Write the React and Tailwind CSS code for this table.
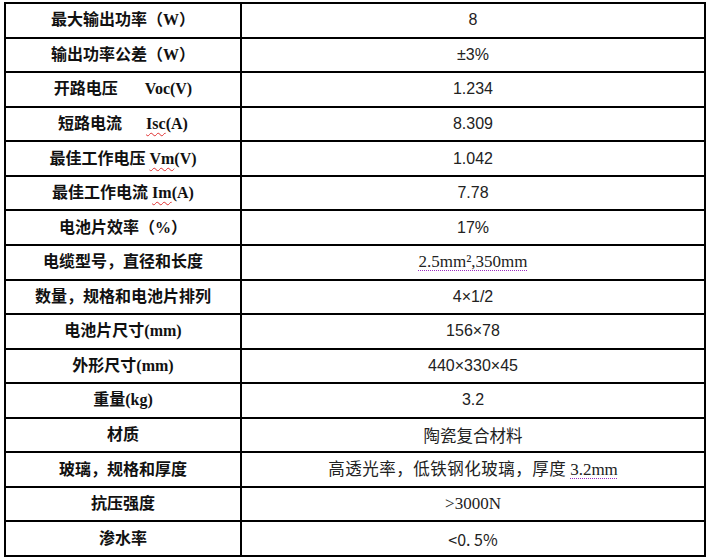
import React from 'react';

const wavy = 'underline decoration-wavy decoration-[#e03030] decoration-1 underline-offset-[3px]';
const dotted = 'underline decoration-dotted decoration-[#9b30c0] decoration-1 underline-offset-[3px]';

const serif = "font-['Liberation_Serif','Noto_Sans_CJK_SC',serif]";
const sans = "font-['Liberation_Sans','Noto_Sans_CJK_SC',sans-serif] text-[16px]";
const cjk = "font-['Noto_Sans_CJK_SC',sans-serif] text-[16.5px]";
const latin = "font-['Liberation_Serif',serif] text-[17px]";

const rows = [
  { label: <>最大输出功率（W）</>, value: <span className={sans}>8</span> },
  { label: <>输出功率公差（W）</>, value: <span className={sans}>±3%</span> },
  { label: <>开路电压<span className="inline-block w-[27px]" />Voc(V)</>, value: <span className={sans}>1.234</span> },
  { label: <>短路电流<span className="inline-block w-[24px]" /><span className={wavy}>Isc</span>(A)</>, value: <span className={sans}>8.309</span> },
  { label: <>最佳工作电压<span className="inline-block w-[4px]" /><span className={wavy}>Vm</span>(V)</>, value: <span className={sans}>1.042</span> },
  { label: <>最佳工作电流<span className="inline-block w-[4px]" /><span className={wavy}>Im</span>(A)</>, value: <span className={sans}>7.78</span> },
  { label: <>电池片效率（%）</>, value: <span className={sans}>17%</span> },
  { label: <>电缆型号，直径和长度</>, value: <span className={`${latin} ${dotted}`}>2.5mm²,350mm</span> },
  { label: <>数量，规格和电池片排列</>, value: <span className={sans}>4×1/2</span> },
  { label: <>电池片尺寸(mm)</>, value: <span className={sans}>156×78</span> },
  { label: <>外形尺寸(mm)</>, value: <span className={sans}>440×330×45</span> },
  { label: <>重量(kg)</>, value: <span className={sans}>3.2</span> },
  { label: <>材质</>, value: <span className={cjk}>陶瓷复合材料</span> },
  {
    label: <>玻璃，规格和厚度</>,
    value: (
      <span className={`${cjk} tracking-[0.5px]`}>
        高透光率，低铁钢化玻璃，厚度<span className="inline-block w-[4px]" />
        <span className={`${latin} tracking-normal ${dotted}`}>3.2mm</span>
      </span>
    ),
  },
  { label: <>抗压强度</>, value: <span className={latin}>&gt;3000N</span> },
  { label: <>渗水率</>, value: <span className={`${cjk} text-[16px] whitespace-pre`}>&lt;0. 5%</span> },
];

export default function App() {
  return (
    <div className="w-[709px] h-[559px] bg-white pt-[2px] pl-[4px] text-[#111]">
      <div className="w-[702px] h-[555px] flex flex-col border-l-2 border-r-2 border-b-2 border-black">
        {rows.map((r, i) => (
          <div key={i} className="flex-1 flex border-t-2 border-black">
            <div className={`w-[234px] flex items-center justify-center text-[16px] font-bold whitespace-nowrap ${serif}`}>
              {r.label}
            </div>
            <div className="w-[2px] bg-black" />
            <div className="flex-1 flex items-center justify-center text-[#222] whitespace-nowrap">
              {r.value}
            </div>
          </div>
        ))}
      </div>
    </div>
  );
}
